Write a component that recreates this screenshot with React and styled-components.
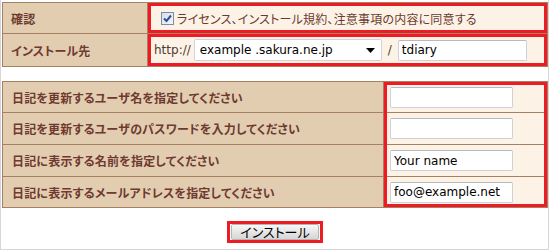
import React from 'react';
import styled, { createGlobalStyle } from 'styled-components';

const GlobalStyle = createGlobalStyle`
  html, body {
    margin: 0;
    padding: 0;
    background: #fff;
  }
  body {
    font-family: "Noto Sans CJK JP", sans-serif;
  }
`;

const Page = styled.div`
  box-sizing: border-box;
  width: 549px;
  height: 250px;
  padding: 2px 0 0 1px;
  border: 1px solid #d6d6d6;
  border-top: 0;
  background: #fff;
`;

const FormTable = styled.div`
  display: grid;
  grid-template-columns: ${props => props.$labelWidth}px 1fr;
  grid-template-rows: ${props => props.$rows};
  gap: 1px;
  background: #a58062;
  border: 1px solid #a58062;
  & + & {
    margin-top: 14px;
  }
`;

const LabelCell = styled.div`
  grid-column: 1;
  grid-row: ${props => props.$row};
  display: flex;
  align-items: center;
  padding-left: ${props => props.$indent}px;
  background: #e3cdb0;
  color: #6e3a30;
  font-size: 12px;
  font-weight: bold;
  font-feature-settings: "palt";
  letter-spacing: 0.2px;
  white-space: nowrap;
`;

const ValueCell = styled.div`
  grid-column: 2;
  grid-row: ${props => props.$row};
  display: flex;
  align-items: center;
  gap: ${props => props.$gap || 0}px;
  padding-left: ${props => props.$indent}px;
  background: #fdf2e6;
  box-shadow: ${props => (props.$highlight ? 'inset 0 0 0 3px #ed1c24' : 'none')};
  color: #5e3a30;
`;

const HighlightFrame = styled.div`
  grid-column: 2;
  grid-row: 1 / -1;
  border: 3px solid #ed1c24;
  pointer-events: none;
  z-index: 1;
`;

const CheckBox = styled.span`
  box-sizing: border-box;
  width: 13px;
  height: 13px;
  margin-left: 1px;
  display: inline-flex;
  align-items: center;
  justify-content: center;
  border: 1px solid #7f8da1;
  background: linear-gradient(135deg, #d9dee6 0%, #f4f6f9 100%);
`;

const AgreeText = styled.span`
  font-size: 12px;
  font-feature-settings: "palt";
  letter-spacing: 0.2px;
  color: #6b3a30;
  white-space: nowrap;
`;

const UrlText = styled.span`
  font-family: "DejaVu Sans", sans-serif;
  font-size: 12px;
  color: #4f3a33;
`;

const SelectBox = styled.div`
  box-sizing: border-box;
  width: 188px;
  height: 22px;
  display: flex;
  align-items: center;
  justify-content: space-between;
  padding: 0 6px 0 5px;
  background: #fff;
  border: 1px solid #cfd3da;
  border-radius: 2px;
  font-family: "DejaVu Sans", sans-serif;
  font-size: 12px;
  color: #000;
`;

const TextInput = styled.input`
  box-sizing: border-box;
  width: ${props => props.$width}px;
  height: 21px;
  margin: 0;
  padding: 0 3px;
  background: #fff;
  border: 1px solid #cdd2da;
  border-top-color: #b4b9c2;
  border-radius: 2px;
  font-family: "DejaVu Sans", sans-serif;
  font-size: 12px;
  color: #000;
  outline: none;
`;

const ButtonRow = styled.div`
  display: flex;
  justify-content: center;
  margin-top: 13px;
`;

const ButtonFrame = styled.span`
  display: inline-flex;
  padding: 0 1px;
  border: 3px solid #ed1c24;
`;

const InstallButton = styled.button`
  box-sizing: border-box;
  width: 88px;
  height: 16px;
  margin: 0;
  padding: 0;
  display: flex;
  align-items: center;
  justify-content: center;
  border: 1px solid #b5b5b5;
  border-radius: 2px;
  background: linear-gradient(#f7f7f7, #d6d6d6);
  font-family: "Noto Sans CJK JP", sans-serif;
  font-size: 13px;
  line-height: 14px;
  font-feature-settings: "palt";
  color: #000;
`;

const userFields = [
  { label: '日記を更新するユーザ名を指定してください', value: '' },
  { label: '日記を更新するユーザのパスワードを入力してください', value: '', type: 'password' },
  { label: '日記に表示する名前を指定してください', value: 'Your name' },
  { label: '日記に表示するメールアドレスを指定してください', value: 'foo@example.net' },
];

const App = () => (
  <Page>
    <GlobalStyle />
    <FormTable $labelWidth={144} $rows="30px 32px">
      <LabelCell $row={1} $indent={8}>確認</LabelCell>
      <ValueCell $row={1} $indent={12} $gap={3} $highlight>
        <CheckBox>
          <svg width="9" height="9" viewBox="0 0 9 9">
            <path d="M1 4.5 L3.5 7 L8 1.5" fill="none" stroke="#2d4ea0" strokeWidth="2" />
          </svg>
        </CheckBox>
        <AgreeText>ライセンス、インストール規約、注意事項の内容に同意する</AgreeText>
      </ValueCell>
      <LabelCell $row={2} $indent={8}>インストール先</LabelCell>
      <ValueCell $row={2} $indent={6} $gap={3} $highlight>
        <UrlText>http://</UrlText>
        <SelectBox>
          <span>example .sakura.ne.jp</span>
          <svg width="9" height="5" viewBox="0 0 9 5">
            <path d="M0 0 H9 L4.5 5 Z" fill="#000" />
          </svg>
        </SelectBox>
        <UrlText style={{ margin: '0 3px' }}>/</UrlText>
        <TextInput $width={129} defaultValue="tdiary" />
      </ValueCell>
    </FormTable>

    <FormTable $labelWidth={380} $rows="30px 31px 31px 30px">
      {userFields.map((f, i) => (
        <React.Fragment key={f.label}>
          <LabelCell $row={i + 1} $indent={9}>{f.label}</LabelCell>
          <ValueCell $row={i + 1} $indent={6}>
            <TextInput $width={123} type={f.type || 'text'} defaultValue={f.value} />
          </ValueCell>
        </React.Fragment>
      ))}
      <HighlightFrame />
    </FormTable>

    <ButtonRow>
      <ButtonFrame>
        <InstallButton>インストール</InstallButton>
      </ButtonFrame>
    </ButtonRow>
  </Page>
);

export default App;
